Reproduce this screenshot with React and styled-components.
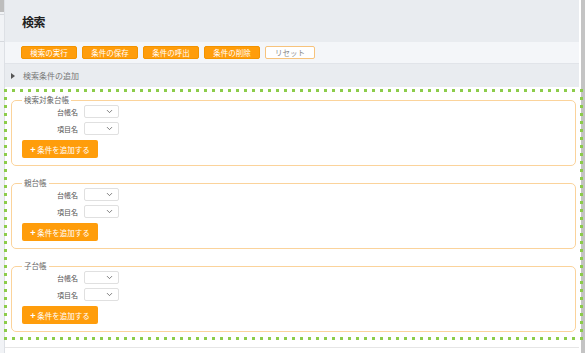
import React from 'react'
import styled, { createGlobalStyle } from 'styled-components'
import { ChevronDown } from 'lucide-react'

const Global = createGlobalStyle`
  html, body { margin: 0; padding: 0; background: #fff; }
  body { font-family: "Noto Sans CJK JP", "Noto Sans", sans-serif; }
  * { box-sizing: border-box; }
`

const ORANGE = '#ff9d0b'
const GREEN = '#8ccc4a'

const sections = ['検索対象台帳', '親台帳', '子台帳']
const actions = ['検索の実行', '条件の保存', '条件の呼出', '条件の削除']

export default function App() {
  return (
    <Page>
      <Global />
      <Sidebar>
        <Thumb />
        <SideLine />
      </Sidebar>
      <Main>
        <Header>
          <Title>検索</Title>
        </Header>
        <Toolbar>
          {actions.map((a) => (
            <ToolButton key={a}>{a}</ToolButton>
          ))}
          <ToolButton $ghost>リセット</ToolButton>
        </Toolbar>
        <Accordion>
          <Caret />
          <span>検索条件の追加</span>
        </Accordion>
        <Body>
          <Frame>
            {sections.map((s) => (
              <Group key={s}>
                <Legend>{s}</Legend>
                <Row>
                  <Label>台帳名</Label>
                  <SelectBox>
                    <ChevronDown size={9} strokeWidth={2} color="#555" />
                  </SelectBox>
                </Row>
                <Row>
                  <Label>項目名</Label>
                  <SelectBox>
                    <ChevronDown size={9} strokeWidth={2} color="#555" />
                  </SelectBox>
                </Row>
                <AddButton>
                  <b>+</b> 条件を追加する
                </AddButton>
              </Group>
            ))}
          </Frame>
          <BottomRule />
        </Body>
      </Main>
      <Scrollbar />
    </Page>
  )
}

const Page = styled.div`
  display: flex;
  width: 585px;
  height: 353px;
  overflow: hidden;
`

const Sidebar = styled.div`
  width: 5px;
  flex: none;
  background: #f1f3f6;
  border-right: 1px solid #dde0e5;
`

const Thumb = styled.div`
  height: 12px;
  background: #bdbdbd;
`

const SideLine = styled.div`
  margin-top: 2px;
  height: 28px;
  border-top: 1px solid #d6d9de;
  border-bottom: 1px solid #d6d9de;
`

const Main = styled.div`
  flex: 1;
  min-width: 0;
  display: flex;
  flex-direction: column;
  background: #fff;
`

const Header = styled.div`
  height: 42px;
  background: #e9ecf0;
  display: flex;
  align-items: center;
  padding-left: 17px;
`

const Title = styled.h1`
  margin: 0;
  font-size: 12px;
  font-weight: 700;
  color: #222;
  letter-spacing: -0.5px;
`

const Toolbar = styled.div`
  height: 22px;
  background: #f4f6f9;
  border-bottom: 1px solid #e1e4e9;
  display: flex;
  align-items: center;
  gap: 5px;
  padding-left: 16px;
`

const ToolButton = styled.button`
  height: 13px;
  width: ${(p) => (p.$ghost ? '50px' : '56px')};
  padding: 0;
  border: 1px solid ${(p) => (p.$ghost ? '#f7c37c' : '#f39400')};
  border-radius: 2px;
  background: ${(p) => (p.$ghost ? '#fff' : ORANGE)};
  color: ${(p) => (p.$ghost ? '#8a8a8a' : '#fff')};
  font-family: inherit;
  font-size: 7.5px;
  line-height: 11px;
  text-align: center;
`

const Accordion = styled.div`
  height: 23px;
  background: #e9ecf0;
  display: flex;
  align-items: center;
  padding-left: 6px;
  font-size: 8px;
  color: #777;
  gap: 8px;
`

const Caret = styled.span`
  width: 0;
  height: 0;
  border-top: 3px solid transparent;
  border-bottom: 3px solid transparent;
  border-left: 4px solid #555;
`

const Body = styled.div`
  flex: 1;
  display: flex;
  flex-direction: column;
  padding-top: 2px;
`

/* annotation frame, drawn over the scrollbar edge */
const Frame = styled.div`
  position: relative;
  margin: 0 -4px 0 -1px;
  padding: 6px 7px 8px 7px;
  background:
    linear-gradient(to right, ${GREEN} 3px, transparent 3px) top left / 8px 3px repeat-x,
    linear-gradient(to right, ${GREEN} 3px, transparent 3px) bottom left / 8px 3px repeat-x,
    linear-gradient(to bottom, ${GREEN} 3px, transparent 3px) top left / 3px 8px repeat-y,
    linear-gradient(to bottom, ${GREEN} 3px, transparent 3px) top right / 3px 8px repeat-y;
  display: flex;
  flex-direction: column;
  gap: 12px;
`

const Group = styled.fieldset`
  margin: 0;
  padding: 0 10px 7px 10px;
  border: 1px solid #fbd39b;
  border-radius: 5px;
  display: flex;
  flex-direction: column;
  gap: 4px;
  min-width: 0;
`

const Legend = styled.legend`
  padding: 0 2px;
  font-size: 7.5px;
  line-height: 10px;
  color: #666;
`

const Row = styled.div`
  display: flex;
  align-items: center;
  gap: 6px;
  height: 13px;
`

const Label = styled.span`
  width: 56px;
  text-align: right;
  font-size: 7px;
  color: #555;
`

const SelectBox = styled.div`
  width: 35px;
  height: 13px;
  border: 1px solid #e0e0e0;
  border-radius: 2px;
  background: #fff;
  display: flex;
  align-items: center;
  justify-content: flex-end;
  padding-right: 4px;
`

const AddButton = styled.button`
  margin-top: 1px;
  width: 76px;
  height: 18px;
  padding: 0;
  border: none;
  border-radius: 2px;
  background: ${ORANGE};
  color: #fff;
  font-family: inherit;
  font-size: 7.5px;
  text-align: center;

  b {
    font-size: 9px;
    font-weight: 700;
  }
`

const BottomRule = styled.div`
  margin-top: 7px;
  border-top: 1px solid #e6e6e6;
`

const Scrollbar = styled.div`
  width: 6px;
  flex: none;
  border-left: 2px solid #fff;
  background: #c4c4c4;
`
